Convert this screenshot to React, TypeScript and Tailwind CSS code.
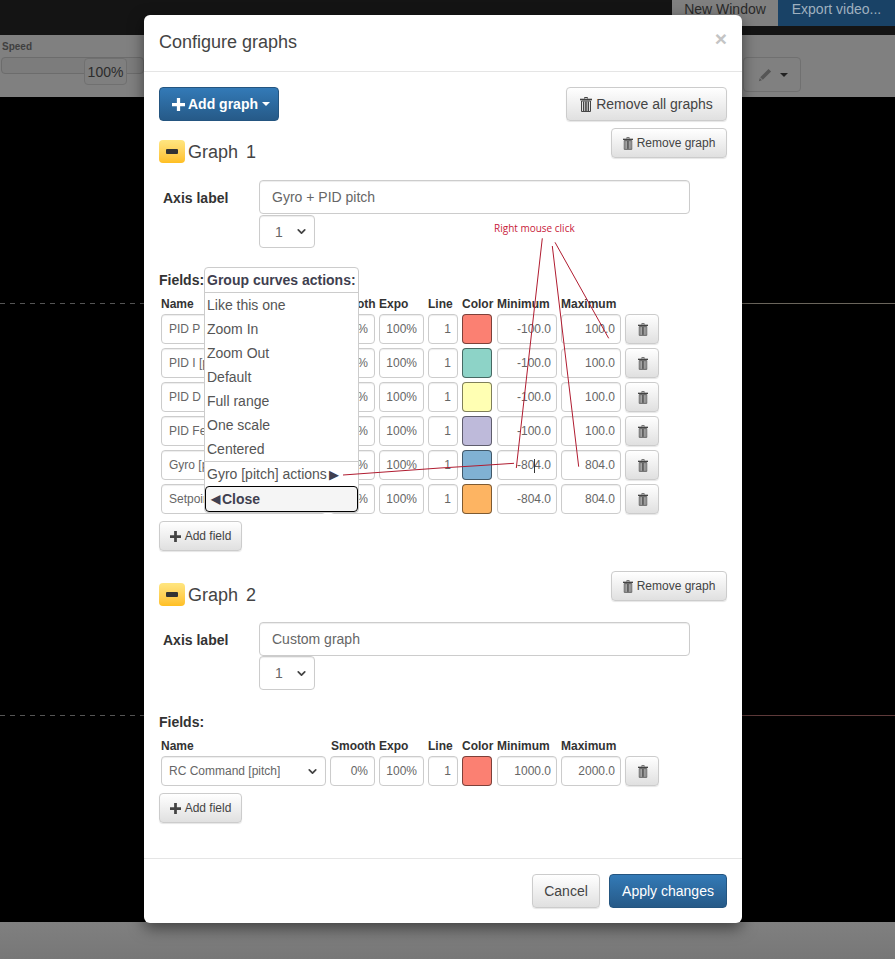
import { ChevronDown } from "lucide-react";

type FieldRow = {
  name: string;
  smooth: string;
  expo: string;
  line: string;
  color: string;
  min: string;
  max: string;
  focused?: boolean;
};

const graphOneRows: FieldRow[] = [
  { name: "PID P [pitch]", smooth: "0%", expo: "100%", line: "1", color: "bg-[#fb8072]", min: "-100.0", max: "100.0" },
  { name: "PID I [pitch]", smooth: "0%", expo: "100%", line: "1", color: "bg-[#8dd3c7]", min: "-100.0", max: "100.0" },
  { name: "PID D [pitch]", smooth: "0%", expo: "100%", line: "1", color: "bg-[#ffffb3]", min: "-100.0", max: "100.0" },
  { name: "PID Feedforward", smooth: "0%", expo: "100%", line: "1", color: "bg-[#bebada]", min: "-100.0", max: "100.0" },
  { name: "Gyro [pitch]", smooth: "0%", expo: "100%", line: "1", color: "bg-[#80b1d3]", min: "-804.0", max: "804.0", focused: true },
  { name: "Setpoint [pitch]", smooth: "0%", expo: "100%", line: "1", color: "bg-[#fdb462]", min: "-804.0", max: "804.0" },
];

const graphTwoRows: FieldRow[] = [
  { name: "RC Command [pitch]", smooth: "0%", expo: "100%", line: "1", color: "bg-[#fb8072]", min: "1000.0", max: "2000.0" },
];

const menuItems = ["Like this one", "Zoom In", "Zoom Out", "Default", "Full range", "One scale", "Centered"];

const inputClass = "h-[30px] rounded border border-[#ccc] bg-white text-[#666] text-xs shadow-[inset_0_1px_1px_rgba(0,0,0,0.075)]";
const defaultButton = "rounded border border-[#ccc] bg-gradient-to-b from-white to-[#e0e0e0] text-[#444] shadow-[0_1px_1px_rgba(0,0,0,0.1)]";

function TrashIcon({ className = "" }: { className?: string }) {
  return (
    <svg viewBox="0 0 12 15" className={className} fill="none" stroke="currentColor" strokeWidth="1">
      <path d="M4.500 1.500V.5h3v1" />
      <path d="M0 2.500h12" strokeWidth="1.600" />
      <path d="M1.500 4h9v10.500h-9z" />
      <path d="M3.500 4.500v9.500M5.300 4.500v9.500M6.800 4.500v9.500M8.500 4.500v9.500" strokeWidth="1.100" />
    </svg>
  );
}

function PlusIcon({ className = "" }: { className?: string }) {
  return (
    <svg viewBox="0 0 12 12" className={className} fill="currentColor">
      <path d="M4.500 0h3v4.500H12v3H7.500V12h-3V7.500H0v-3h4.500V0Z" />
    </svg>
  );
}

function NativeSelect({ value, className }: { value: string; className: string }) {
  return (
    <div className={`${inputClass} ${className} flex items-center justify-between`}>
      <span className="truncate">{value}</span>
      <ChevronDown size={13} strokeWidth={3.2} className="shrink-0 text-[#444]" />
    </div>
  );
}

function FieldRows({ rows }: { rows: FieldRow[] }) {
  return (
    <div className="ml-0.5 flex flex-col gap-1">
      {rows.map((row) => (
        <div key={row.name} className="flex items-center">
          <NativeSelect value={row.name} className="w-[165px] pl-[7px] pr-1.5" />
          <div className={`${inputClass} ml-1 flex w-[45px] items-center justify-end pr-1.5`}>{row.smooth}</div>
          <div className={`${inputClass} ml-1 flex w-[45px] items-center justify-end pr-1.5`}>{row.expo}</div>
          <div className={`${inputClass} ml-1 flex w-[30px] items-center justify-end pr-1.5`}>{row.line}</div>
          <div className={`ml-1 h-[30px] w-[30px] rounded border border-[#00000080] ${row.color}`} />
          <div
            className={`${inputClass} relative ml-[5px] flex w-[60px] items-center justify-end pr-[5px] ${
              row.focused ? "border-[#66afe9] shadow-[0_0_8px_rgba(102,175,233,0.6)]" : ""
            }`}
          >
            {row.min}
            {row.focused && <span className="absolute right-[21px] top-[8px] h-[14px] w-px bg-[#333]" />}
          </div>
          <div className={`${inputClass} ml-1 flex w-[60px] items-center justify-end pr-[5px]`}>{row.max}</div>
          <button className={`${defaultButton} ml-1 flex h-[30px] w-[34px] items-center justify-center`}>
            <TrashIcon className="ml-0.5 h-[13px] w-[10px]" />
          </button>
        </div>
      ))}
    </div>
  );
}

type GraphProps = {
  index: number;
  label: string;
  rows: FieldRow[];
  axisGap: string;
  selectClass: string;
};

function Graph({ index, label, rows, axisGap, selectClass }: GraphProps) {
  return (
    <section>
      <div className="flex items-start justify-between">
        <div className="mt-3 flex items-center">
          <div className="flex h-[23px] w-[26px] items-center justify-center rounded bg-gradient-to-b from-[#ffe680] to-[#ffbf1f]">
            <span className="h-[5px] w-3 rounded-[1px] bg-[#333]" />
          </div>
          <h4 className="ml-[3px] h-[23px] text-lg leading-[25px] text-[#444] [word-spacing:3px]">Graph {index}</h4>
        </div>
        <button className={`${defaultButton} flex h-[30px] w-[116px] items-center justify-center gap-1 text-xs`}>
          <TrashIcon className="h-[13px] w-[10px]" />
          Remove graph
        </button>
      </div>
      <div className={`${axisGap} flex`}>
        <label className="ml-1 mt-2 w-24 text-sm font-bold text-[#333]">Axis label</label>
        <div>
          <div className="flex h-[34px] w-[431px] items-center rounded border border-[#ccc] bg-white pl-3 text-sm text-[#666] shadow-[inset_0_1px_1px_rgba(0,0,0,0.075)]">
            {label}
          </div>
          <NativeSelect value="1" className={`${selectClass} w-14 pl-[15px] pr-1.5 text-sm!`} />
        </div>
      </div>
      <p className="mt-6 text-sm font-bold leading-4 text-[#333]">Fields:</p>
      <div className="ml-0.5 mt-2 flex h-4 items-center text-xs font-bold text-[#333]">
        <span className="w-[170px]">Name</span>
        <span className="w-[48px]">Smooth</span>
        <span className="w-[49px]">Expo</span>
        <span className="w-[34px]">Line</span>
        <span className="w-[35px]">Color</span>
        <span className="w-[64px]">Minimum</span>
        <span>Maximum</span>
      </div>
      <div className="mt-[2px]">
        <FieldRows rows={rows} />
      </div>
      <button className={`${defaultButton} mt-[7px] flex h-[30px] w-[83px] items-center justify-center gap-1 text-xs`}>
        <PlusIcon className="h-[11px] w-[11px]" />
        Add field
      </button>
    </section>
  );
}

function CurvesMenu() {
  return (
    <div className="absolute left-[60px] top-[252px] w-[155px] rounded border border-[#ccc] bg-white text-sm text-[#555]">
      <div className="flex h-[25px] items-center border-b border-[#ccc] pl-[2px] font-bold text-[#3f3f50]">Group curves actions:</div>
      <div>
        {menuItems.map((item) => (
          <div key={item} className="flex h-6 items-center pl-[2px]">
            {item}
          </div>
        ))}
      </div>
      <div className="flex h-[25px] items-center border-t border-[#ccc] pl-[2px]">
        Gyro [pitch] actions<span className="ml-0.5 text-[13px] leading-none text-[#3f3f50]">▶</span>
      </div>
      <div className="flex h-[26px] items-center rounded border border-black bg-[#f5f5f5] pl-[5px] font-bold text-[#3f3f50]">
        <span className="text-[12px] leading-none">◀</span>
        <span className="ml-0.5">Close</span>
      </div>
    </div>
  );
}

function Annotation() {
  return (
    <>
      <span className="absolute left-[350px] top-[206px] font-['Open_Sans',sans-serif] text-[10px] leading-[14px] text-[#c8203a]">Right mouse click</span>
      <svg className="pointer-events-none absolute left-0 top-0 h-[908px] w-[598px]" viewBox="144 15 598 908" fill="none" stroke="#b01c30" strokeWidth="1">
        <path d="M542.300 238.300 516.300 468" />
        <path d="M552.300 246 578.700 466.700" />
        <path d="M555 242.300 608.700 338.300" />
        <path d="M343 475 440 468 478 465.700 514 463.300" />
      </svg>
    </>
  );
}

function ConfigureModal() {
  return (
    <div className="absolute left-[144px] top-[15px] h-[908px] w-[598px] rounded-md bg-white shadow-[0_5px_15px_rgba(0,0,0,0.5)]">
      <header className="flex h-[57px] items-center justify-between border-b border-[#e5e5e5] px-[15px]">
        <h3 className="-mt-0.5 text-lg text-[#444]">Configure graphs</h3>
        <span className="-mt-[9px] text-[21px] font-bold leading-none text-[#c4c4c4]">×</span>
      </header>
      <div className="px-[15px] pt-[15px]">
        <div className="flex justify-between">
          <button className="flex h-[34px] w-[120px] items-center justify-center gap-[3px] rounded border border-[#245580] bg-gradient-to-b from-[#337ab7] to-[#265a88] text-sm text-white">
            <PlusIcon className="ml-1 h-[13px] w-[13px]" />
            <span className="font-bold">Add graph</span>
            <span className="ml-px border-x-4 border-t-4 border-x-transparent border-t-white" />
          </button>
          <button className={`${defaultButton} flex h-[34px] w-[161px] items-center justify-center gap-1 text-sm`}>
            <TrashIcon className="h-[15px] w-[12px]" />
            Remove all graphs
          </button>
        </div>
        <div className="mt-[7px]">
          <Graph index={1} label="Gyro + PID pitch" rows={graphOneRows} axisGap="mt-[17px]" selectClass="mt-px h-[33px]!" />
        </div>
        <div className="mt-5">
          <Graph index={2} label="Custom graph" rows={graphTwoRows} axisGap="mt-4" selectClass="h-[34px]!" />
        </div>
      </div>
      <footer className="absolute inset-x-0 bottom-0 flex h-[65px] items-center justify-end gap-[9px] border-t border-[#e5e5e5] px-[15px]">
        <button className={`${defaultButton} h-[34px] w-[68px] text-sm`}>Cancel</button>
        <button className="h-[34px] w-[118px] rounded border border-[#245580] bg-gradient-to-b from-[#337ab7] to-[#265a88] text-sm text-white">Apply changes</button>
      </footer>
      <CurvesMenu />
      <Annotation />
    </div>
  );
}

export default function App() {
  return (
    <div className="relative flex h-[959px] w-[895px] flex-col overflow-hidden bg-black font-['Liberation_Sans',Arial,sans-serif]">
      <div className="flex h-[35px] shrink-0 items-start justify-end bg-[#141414] text-sm leading-[18px]">
        <div className="flex h-[26px] w-[106px] items-start justify-center bg-[#808080] text-[#2a2a2a]">New Window</div>
        <div className="flex h-[26px] w-[117px] items-start justify-center bg-[#194266] text-[#9fb0bf]">Export video...</div>
      </div>
      <div className="flex h-[62px] shrink-0 justify-between bg-[#808080]">
        <div className="relative w-[144px] pl-0.5 pt-1.5">
          <p className="text-[10px] font-bold leading-3 text-[#3f3f3f]">Speed</p>
          <div className="ml-[-1px] mt-[4px] h-[17px] rounded border border-[#6c6c6c] bg-[#7c7c7c]" />
          <div className="absolute left-[84px] top-[23px] flex h-[27px] w-[43px] items-center justify-center rounded border border-[#707070] bg-[#7f7f7f] text-sm text-[#2c2c2c]">100%</div>
        </div>
        <div className="mr-[94px] mt-[22px] flex h-[35px] w-[58px] items-center justify-end gap-2 rounded border border-[#707070] pr-3">
          <svg viewBox="0 0 16 16" className="h-[14px] w-[14px] text-[#555]" fill="currentColor">
            <path d="M12 1l3 3-9.500 9.500-3-3L12 1ZM2 11.500l2.500 2.500L1 15l1-3.500Z" />
          </svg>
          <span className="border-x-4 border-t-4 border-x-transparent border-t-[#222]" />
        </div>
      </div>
      <div className="relative flex-1 bg-black">
        <div className="absolute left-0 top-[206px] h-px w-[144px] bg-[repeating-linear-gradient(90deg,#555_0,#555_5px,transparent_5px,transparent_10px)]" />
        <div className="absolute right-0 top-[206px] h-px w-[153px] bg-[#6a655c]" />
        <div className="absolute left-0 top-[618px] h-px w-[144px] bg-[repeating-linear-gradient(90deg,#555_0,#555_5px,transparent_5px,transparent_10px)]" />
        <div className="absolute right-0 top-[618px] h-px w-[153px] bg-[#5e3a3a]" />
      </div>
      <div className="h-[37px] shrink-0 bg-gradient-to-b from-[#808080] to-[#777]" />
      <ConfigureModal />
    </div>
  );
}
